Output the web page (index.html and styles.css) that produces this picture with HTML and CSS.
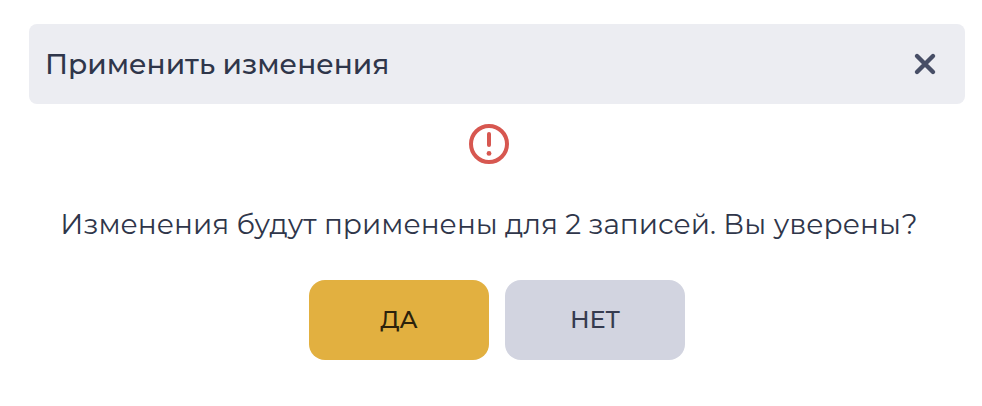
FILE: index.html
```
<!DOCTYPE html>
<html lang="ru">
<head>
    <meta charset="UTF-8">
    <meta name="viewport" content="width=device-width, initial-scale=1.0">
    <title>Применить изменения</title>
    <link rel="stylesheet" href="styles.css">
</head>
<body>

    <div class="modal" role="dialog" aria-labelledby="modal-title">
        <header class="modal-header">
            <h1 class="modal-title" id="modal-title">Применить изменения</h1>
            <button class="close-button" type="button" aria-label="Закрыть">
                <svg class="close-icon" viewBox="0 0 24 24">
                    <path d="M4 4L20 20M20 4L4 20"/>
                </svg>
            </button>
        </header>

        <div class="modal-body">
            <svg class="alert-icon" viewBox="0 0 40 40">
                <circle cx="20" cy="20" r="18"/>
                <path d="M20 10V21"/>
                <circle class="alert-dot" cx="20" cy="29.4" r="2.4"/>
            </svg>
            <p class="message">Изменения будут применены для 2 записей. Вы уверены?</p>
        </div>

        <div class="modal-buttons">
            <button class="button button-yes" type="button">ДА</button>
            <button class="button button-no" type="button">НЕТ</button>
        </div>
    </div>

</body>
</html>
```
FILE: styles.css
```
body {
    font-family: Montserrat, Inter, "Open Sans", sans-serif;
    margin: 0;
    background-color: #fff;
    color: #2f364a;
}

.modal {
    padding: 24px 17px 24px 29px;
}

.modal-header {
    display: flex;
    align-items: center;
    justify-content: space-between;
    height: 80px;
    padding: 0 28px 0 16px;
    box-sizing: border-box;
    border-radius: 8px;
    background-color: #ecedf2;
}

.modal-title {
    margin: 0;
    font-size: 28px;
    font-weight: 500;
    line-height: 40px;
}

.close-button {
    display: flex;
    padding: 0;
    border: none;
    background: none;
    cursor: pointer;
}

.close-icon {
    width: 24px;
    height: 24px;
    fill: none;
    stroke: #474e66;
    stroke-width: 4.4;
    stroke-linecap: round;
}

.modal-body {
    display: flex;
    flex-direction: column;
    align-items: center;
    gap: 40px;
    padding: 20px 16px 36px 0;
}

.alert-icon {
    width: 40px;
    height: 40px;
    fill: none;
    stroke: #d75750;
    stroke-width: 4;
    stroke-linecap: round;
}

.alert-dot {
    fill: #d75750;
    stroke: none;
}

.message {
    margin: 0;
    font-size: 28px;
    line-height: 40px;
    text-align: center;
}

.modal-buttons {
    display: flex;
    justify-content: center;
    gap: 16px;
}

.button {
    width: 180px;
    height: 80px;
    padding: 0 0 2px;
    border: none;
    border-radius: 16px;
    font-family: inherit;
    font-size: 24px;
    font-weight: 500;
    cursor: pointer;
}

.button-yes {
    background-color: #e2b040;
    color: #2b220c;
}

.button-no {
    background-color: #d2d4e0;
    color: #353b4f;
}
```
